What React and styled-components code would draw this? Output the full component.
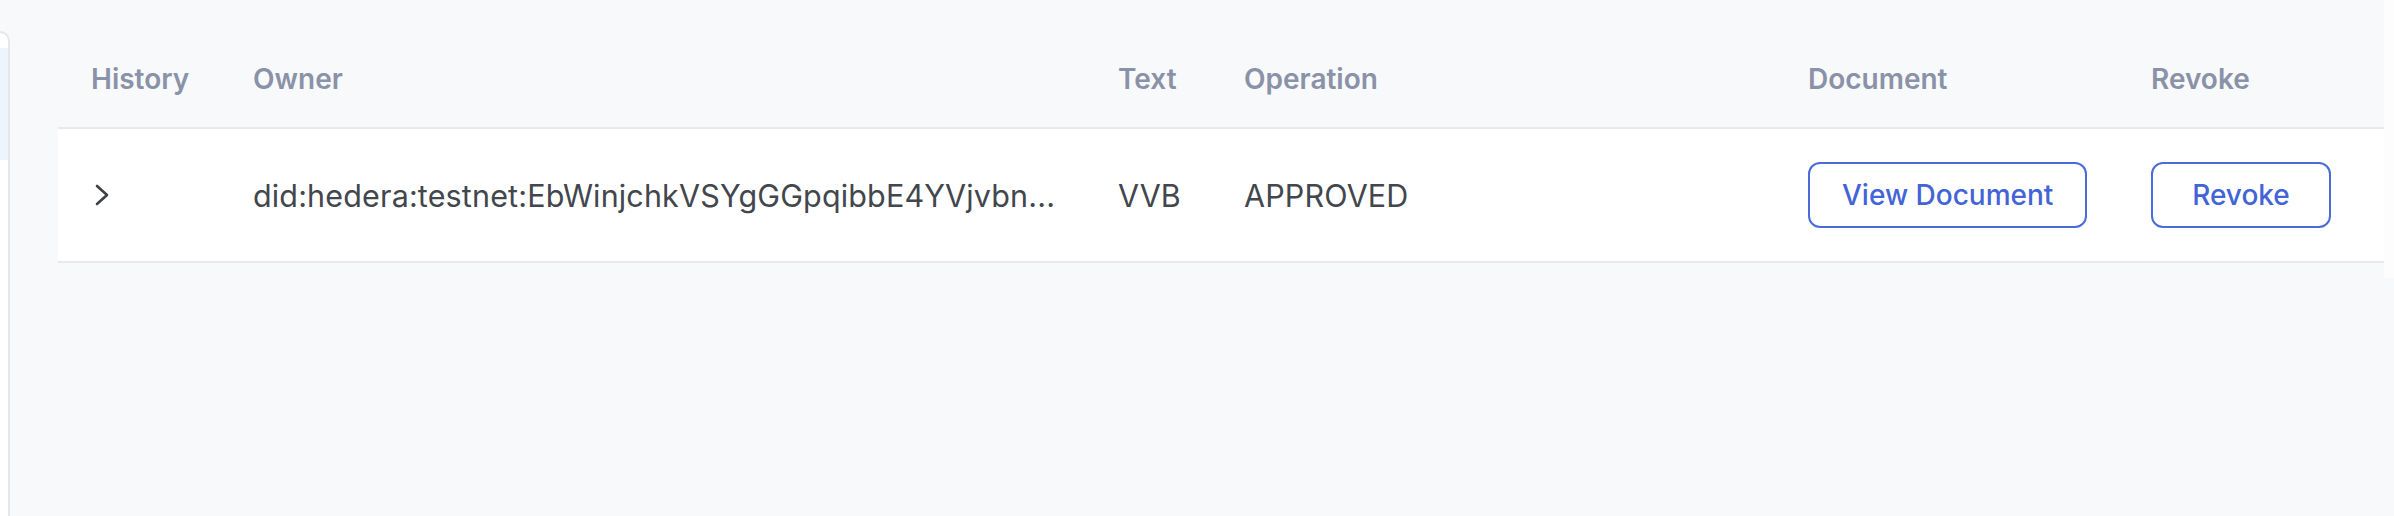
import { createGlobalStyle, styled } from "styled-components";

const GlobalStyle = createGlobalStyle`
  html, body {
    margin: 0;
    padding: 0;
    background: #f8f9fb;
    font-family: "Inter", "Liberation Sans", sans-serif;
  }
`;

const Page = styled.div`
  display: flex;
  align-items: flex-start;
  height: 516px;
  overflow: hidden;
`;

const Sidebar = styled.aside`
  box-sizing: border-box;
  width: 10px;
  height: 485px;
  margin-top: 31px;
  background: #ffffff;
  border-top: 2px solid #e4e7ec;
  border-right: 2px solid #e4e7ec;
  border-top-right-radius: 10px;
  padding-top: 15px;
`;

const SideActive = styled.div`
  height: 112px;
  background: #eef4fc;
`;

const Content = styled.main`
  flex: 1;
  margin-left: 48px;
  padding-top: 31px;
`;

const ScrollStrip = styled.div`
  width: 10px;
  height: 278px;
  background: #fdfdfe;
`;

const Grid = styled.div`
  display: grid;
  grid-template-columns: 162px 865px 126px 564px 343px 1fr;
`;

const HeaderRow = styled(Grid)`
  height: 96px;
  border-bottom: 2px solid #e7e9ee;
`;

const BodyRow = styled(Grid)`
  height: 132px;
  background: #ffffff;
  border-bottom: 2px solid #e7e9ee;
`;

const HeadCell = styled.div`
  display: flex;
  align-items: center;
  padding-left: 33px;
  font-size: 28px;
  font-weight: 600;
  color: #8a92a8;
  white-space: nowrap;
`;

const Cell = styled.div`
  display: flex;
  align-items: center;
  padding-left: ${(p) => p.$pad || 33}px;
  font-size: 30.5px;
  letter-spacing: 0.15px;
  color: #42464d;
  white-space: nowrap;
  overflow: hidden;
`;

const OutlineButton = styled.button`
  box-sizing: border-box;
  height: 66px;
  min-width: 180px;
  padding: 0 32px;
  background: #ffffff;
  border: 2px solid #4a6bda;
  border-radius: 12px;
  font-family: "Inter", "Liberation Sans", sans-serif;
  font-size: 28px;
  font-weight: 500;
  letter-spacing: 0;
  color: #4264d6;
  cursor: pointer;
`;

const Chevron = () => (
  <svg width="16" height="24" viewBox="0 0 16 24" fill="none">
    <polyline
      points="3,3 13,12 3,21"
      stroke="#3d4148"
      strokeWidth="2.6"
      strokeLinecap="round"
      strokeLinejoin="round"
    />
  </svg>
);

const columns = ["History", "Owner", "Text", "Operation", "Document", "Revoke"];

const App = () => {
  return (
    <>
      <GlobalStyle />
      <Page>
        <Sidebar>
          <SideActive />
        </Sidebar>
        <Content>
          <HeaderRow>
            {columns.map((c) => (
              <HeadCell key={c}>{c}</HeadCell>
            ))}
          </HeaderRow>
          <BodyRow>
            <Cell $pad={36}>
              <Chevron />
            </Cell>
            <Cell>did:hedera:testnet:EbWinjchkVSYgGGpqibbE4YVjvbn...</Cell>
            <Cell>VVB</Cell>
            <Cell>APPROVED</Cell>
            <Cell>
              <OutlineButton>View Document</OutlineButton>
            </Cell>
            <Cell>
              <OutlineButton>Revoke</OutlineButton>
            </Cell>
          </BodyRow>
        </Content>
        <ScrollStrip />
      </Page>
    </>
  );
};

export default App;
